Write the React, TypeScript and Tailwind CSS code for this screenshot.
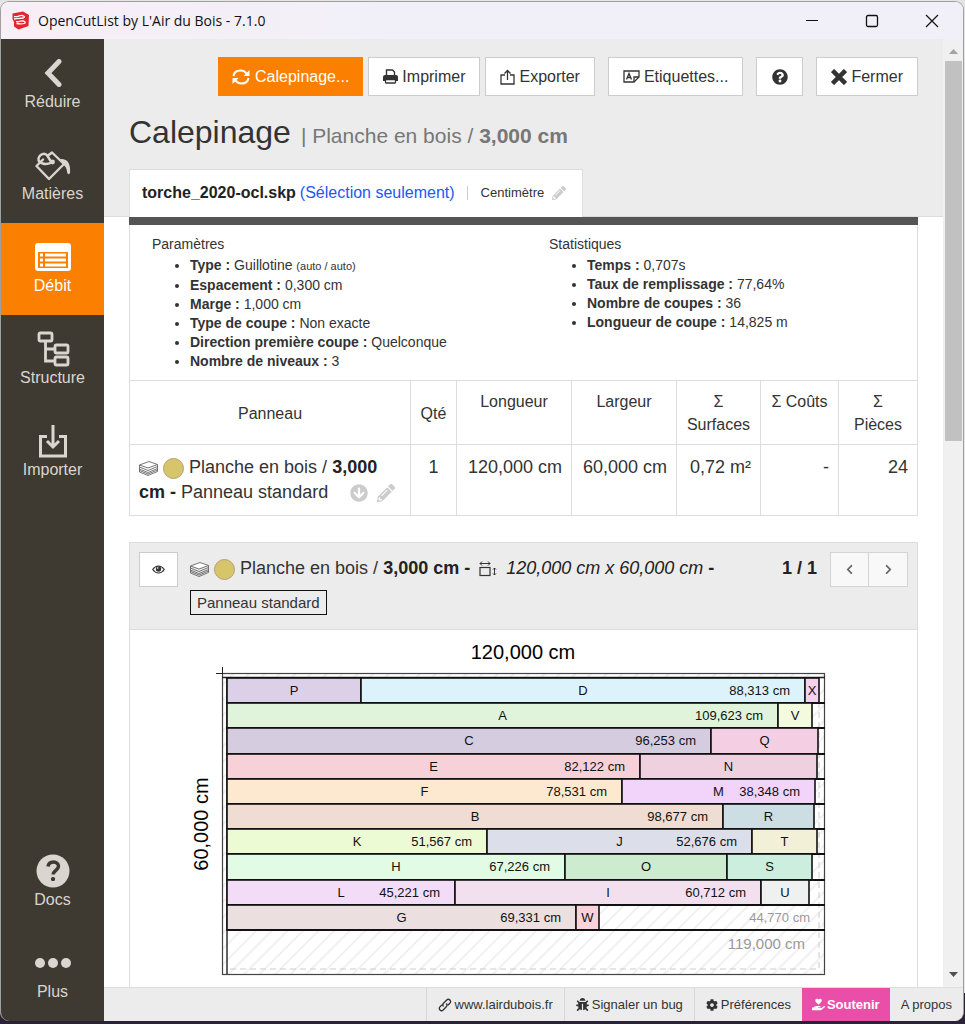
import React, { useState } from "react";
import {
  FaBug,
  FaChevronLeft,
  FaCog,
  FaHandHoldingHeart,
  FaPencilAlt,
  FaQuestionCircle,
  FaArrowCircleDown,
} from "react-icons/fa";

interface Part {
  name: string;
  end: number;
  color: string;
  length?: string;
}

// `end` is the right edge of the part, the first part of a row starts at BOARD_LEFT
const BOARD_LEFT = 97;
const BOARD_RIGHT = 695;
const BOARD_TOP = 48;
const ROW_PITCH = 25.2;

const rows: Part[][] = [
  [
    { name: "P", end: 231, color: "#dccfe8" },
    { name: "D", end: 675, color: "#dcf3fb", length: "88,313 cm" },
    { name: "X", end: 689, color: "#f3d2f0" },
  ],
  [
    { name: "A", end: 648, color: "#dff4da", length: "109,623 cm" },
    { name: "V", end: 682, color: "#f3fadd" },
  ],
  [
    { name: "C", end: 581, color: "#d6cce0", length: "96,253 cm" },
    { name: "Q", end: 688, color: "#f4cee3" },
  ],
  [
    { name: "E", end: 510, color: "#f8d0d8", length: "82,122 cm" },
    { name: "N", end: 687, color: "#efd0df" },
  ],
  [
    { name: "F", end: 492, color: "#fce9cf", length: "78,531 cm" },
    { name: "M", end: 685, color: "#f2d4fa", length: "38,348 cm" },
  ],
  [
    { name: "B", end: 593, color: "#efdcd3", length: "98,677 cm" },
    { name: "R", end: 684, color: "#cddde4" },
  ],
  [
    { name: "K", end: 357, color: "#edfbd5", length: "51,567 cm" },
    { name: "J", end: 622, color: "#dcdfe9", length: "52,676 cm" },
    { name: "T", end: 687, color: "#f2f0d7" },
  ],
  [
    { name: "H", end: 435, color: "#e1fbe4", length: "67,226 cm" },
    { name: "O", end: 597, color: "#cdebcf" },
    { name: "S", end: 682, color: "#cbeedf" },
  ],
  [
    { name: "L", end: 325, color: "#f3dcf8", length: "45,221 cm" },
    { name: "I", end: 631, color: "#f3e0ee", length: "60,712 cm" },
    { name: "U", end: 679, color: "#eff1f1" },
  ],
  [
    { name: "G", end: 446, color: "#ebdfdf", length: "69,331 cm" },
    { name: "W", end: 469, color: "#f9d2da" },
  ],
];

const rowTop = (i: number) => BOARD_TOP + Math.round(i * ROW_PITCH);

const CuttingDiagram = () => (
  <svg viewBox="0 0 787 357" className="block w-full h-auto" fontFamily="Liberation Sans, Arial, sans-serif">
    <defs>
      <pattern id="waste" width="11" height="11" patternUnits="userSpaceOnUse" patternTransform="rotate(45)">
        <path d="M5 0V11" stroke="#e2e2e2" strokeWidth="1" />
      </pattern>
    </defs>
    <text x="393" y="29" fontSize="20" textAnchor="middle">120,000 cm</text>
    <text x="78" y="194" fontSize="20" textAnchor="middle" transform="rotate(-90 78 194)">60,000 cm</text>

    <rect x="92.5" y="43.5" width="602" height="301" fill="#fff" />
    <rect x="92.5" y="43.5" width="602" height="301" fill="url(#waste)" stroke="#444" strokeWidth="1.2" />
    <path d="M86 43.5H93M92.5 37V44" stroke="#222" />
    <path d="M92 47.5H695M97 47V344" stroke="#222" strokeWidth="1.4" />
    <path d="M689 52V339H98" fill="none" stroke="#ccc" strokeDasharray="6 4" />

    {rows.map((row, i) => {
      const top = rowTop(i);
      const height = rowTop(i + 1) - top;
      return (
        <g key={i}>
          {row.map((part, j) => {
            const start = j === 0 ? BOARD_LEFT : row[j - 1].end;
            return (
              <g key={part.name}>
                <rect x={start} y={top} width={part.end - start} height={height} fill={part.color} stroke="#111" strokeWidth="1.6" />
                <text x={(start + part.end) / 2} y={top + 17} fontSize="13" textAnchor="middle" fill="#111">
                  {part.name}
                </text>
                {part.length && (
                  <text x={part.end - 15} y={top + 17} fontSize="13" textAnchor="end" fill="#111">
                    {part.length}
                  </text>
                )}
              </g>
            );
          })}
          <path d={`M${BOARD_LEFT} ${top + height}H${BOARD_RIGHT}`} stroke="#111" strokeWidth="1.8" />
        </g>
      );
    })}
    <text x="680" y="292" fontSize="13" textAnchor="end" fill="#999">44,770 cm</text>
    <text x="675" y="319" fontSize="15" textAnchor="end" fill="#999">119,000 cm</text>
  </svg>
);

const SketchUpLogo = () => (
  <svg width="18" height="19" viewBox="0 0 18 19">
    <path d="M.5 2.500 11 .5 17 4l-.5 11L6.500 18.500 2 15.500V11L.5 8Z" fill="#e3262e" />
    <path d="M2 5.500C6 6.500 7 4 10 4.500s3 2 1 2.500-5 0-9 1M4 10.500c3 1 4-1 7-.5s2.500 2 1 2.500-4 .5-7.500 0" stroke="#fff" strokeWidth="1.300" fill="none" />
  </svg>
);

const BucketIcon = () => (
  <svg width="36" height="31" viewBox="0 0 36 31" fill="none" stroke="currentColor" strokeWidth="2.400" strokeLinejoin="round" strokeLinecap="round">
    <path d="M8 9.500 1.500 16 14 29 29 14 17 2.500 13 5.500" />
    <path d="M16.500 12.500 12.500 6C10 2 4.500 4 3.500 8.500c-.5 5 7 7 13 4" />
    <circle cx="17.500" cy="12" r="2.400" fill="currentColor" stroke="none" />
    <path d="M26 9.500c5 0 9 2.500 8.500 13-.3 1.500-1.500 1.500-1.700 0-.3-3-1-6-4.300-8.500Z" fill="currentColor" strokeWidth="1.200" />
  </svg>
);

const ListIcon = () => (
  <svg width="36" height="28" viewBox="0 0 36 28">
    <rect width="36" height="28" rx="3" fill="currentColor" />
    <rect x="3" y="9" width="30" height="16" fill="#fb7f00" />
    <path d="M5 12H8M10 12H31M5 17H8M10 17H31M5 22H8M10 22H31" stroke="currentColor" strokeWidth="3" />
  </svg>
);

const TreeIcon = () => (
  <svg width="34" height="36" viewBox="0 0 34 36" fill="none" stroke="currentColor" strokeWidth="2.800">
    <rect x="3" y="2" width="13" height="8" rx="1.500" />
    <rect x="19" y="14" width="13" height="8" rx="1.500" />
    <rect x="19" y="26" width="13" height="8" rx="1.500" />
    <path d="M9.500 10V30H19M9.500 18H19" />
  </svg>
);

const ImportIcon = () => (
  <svg width="30" height="34" viewBox="0 0 30 34" fill="none" stroke="currentColor" strokeWidth="3">
    <path d="M9 12.500H2.500V32H27.500V12.500H21" />
    <path d="M15 1V23M9 17l6 6 6-6" />
  </svg>
);

const DocsIcon = () => (
  <svg width="34" height="34" viewBox="0 0 34 34">
    <circle cx="17" cy="17" r="16.500" fill="currentColor" />
    <path d="M12 12.500c.5-3.500 3-4.500 5.500-4.500 3 0 5 1.800 5 4.300 0 4-5.300 4.200-5.300 8.200" fill="none" stroke="#3e3a31" strokeWidth="3.500" />
    <rect x="15" y="23" width="4" height="4" rx="1.500" fill="#3e3a31" />
  </svg>
);

const DotsIcon = () => (
  <svg width="36" height="10" viewBox="0 0 36 10" fill="currentColor">
    <circle cx="5" cy="5" r="5" />
    <circle cx="18" cy="5" r="5" />
    <circle cx="31" cy="5" r="5" />
  </svg>
);

const BackIcon = () => (
  <svg width="20" height="28" viewBox="0 0 20 28" fill="none" stroke="currentColor" strokeWidth="5">
    <path d="M16 2.500 5 14l11 11.500" strokeLinecap="round" />
  </svg>
);

const RefreshIcon = () => (
  <svg width="18" height="16" viewBox="0 0 18 16" fill="none" stroke="currentColor" strokeWidth="2">
    <path d="M1.500 7C2 3.500 5 1.500 8.500 1.500c2.500 0 4.500 1 5.800 2.800" />
    <path d="M16.500 9c-.5 3.500-3.500 5.500-7 5.500-2.500 0-4.500-1-5.800-2.800" />
    <path d="M17.500 1v6h-6ZM.5 15V9h6Z" fill="currentColor" stroke="none" />
  </svg>
);

const PrintIcon = () => (
  <svg width="15" height="15" viewBox="0 0 15 15">
    <path d="M3.500 7V1h6l2 2v4" fill="#fff" stroke="currentColor" strokeWidth="1.400" />
    <path d="M2 6h11a2 2 0 0 1 2 2v4h-2v-2H2v2H0V8a2 2 0 0 1 2-2Z" fill="currentColor" />
    <rect x="2.500" y="10.500" width="10" height="3.500" rx=".5" fill="#fff" stroke="currentColor" strokeWidth="1.300" />
  </svg>
);

const ExportIcon = () => (
  <svg width="15" height="16" viewBox="0 0 15 16" fill="none" stroke="currentColor" strokeWidth="1.300">
    <path d="M5 6H1v9h13V6H10" />
    <path d="M7.500 11V1.500M4.500 4.500l3-3 3 3" />
  </svg>
);

const LabelIcon = () => (
  <svg width="17" height="13" viewBox="0 0 17 13" fill="none" stroke="currentColor" strokeWidth="1.300">
    <path d="M11 12H1V1H16V7Z" />
    <path d="M11 12V7H16" />
    <path d="M3.500 9.500 6 3.500l2.500 6M4.500 7.500H7.500" />
  </svg>
);

const CrossIcon = () => (
  <svg width="16" height="16" viewBox="0 0 16 16" stroke="currentColor" strokeWidth="4.500">
    <path d="M1.500 1.500 14.500 14.500M14.500 1.500 1.500 14.500" />
  </svg>
);

const LayersIcon = () => (
  <svg width="19" height="15" viewBox="0 0 19 15" className="inline-block align-middle" fill="none" stroke="#666" strokeWidth=".9">
    <path d="M.5 4 10 .500 18.500 3.500 9 7Z" fill="#fff" />
    <path d="M.5 4v7L9 14.500 18.500 10.500V3.500M.5 6 9 9.500 18.500 5.500M.5 8 9 11.500 18.500 7.500M.5 9.500 9 13 18.500 9" />
  </svg>
);

const DimensionIcon = () => (
  <svg width="18" height="16" viewBox="0 0 18 16" className="mx-1 inline-block align-middle" fill="none" stroke="currentColor">
    <rect x="1" y="6.500" width="10" height="8" strokeWidth="1.200" />
    <path d="M1 2.500H11M3 .500 1 2.500 3 4.500M9 .500 11 2.500 9 4.500M15.500 7V14M14 8.500l1.500-1.500L17 8.500M14 12.500l1.500 1.500 1.500-1.500" />
  </svg>
);

const EyeIcon = () => (
  <svg width="13" height="9" viewBox="0 0 13 9">
    <path d="M.7 4.500C2.500 2 4.500 1 6.500 1s4 1 5.800 3.500C10.500 7 8.500 8 6.500 8S2.500 7 .7 4.500Z" fill="none" stroke="currentColor" strokeWidth="1.200" />
    <circle cx="6.500" cy="4" r="2.700" fill="currentColor" />
    <circle cx="5.700" cy="3" r=".8" fill="#fff" />
  </svg>
);

const LinkIcon = () => (
  <svg width="14" height="14" viewBox="0 0 14 14" fill="none" stroke="currentColor" strokeWidth="1.300">
    <path d="M5.500 8.500c-1-1-1-2.200 0-3.200L8.700 2c1-1 2.300-1 3.200 0s1 2.300 0 3.200L9.800 7.300" />
    <path d="M8.300 5.500c1 1 1 2.200 0 3.200L5.200 12c-1 1-2.300 1-3.200 0s-1-2.300 0-3.200l2.200-2.200" />
  </svg>
);

const MaterialDot = () => (
  <span className="inline-block size-[21px] rounded-full border border-[#b5a06e] bg-[#d7c56c] align-middle"></span>
);

interface SideItemProps {
  icon: React.ReactNode;
  label: string;
  active?: boolean;
  onClick?: () => void;
}

const SideItem: React.FC<SideItemProps> = ({ icon, label, active, onClick }) => (
  <button
    onClick={onClick}
    className={`flex flex-col items-center w-full h-[92px] pt-4 text-[16px] leading-[22px] ${
      active ? "bg-[#fb7f00] text-white" : "text-[#dad6cf]"
    }`}
  >
    <span className="flex h-9 items-center">{icon}</span>
    {label}
  </button>
);

const toolButton =
  "flex items-center justify-center gap-1 h-[39px] px-[14px] border border-[#ccc] bg-white text-[#333] whitespace-nowrap";

const footerItem = "flex items-center gap-[3px] border-l border-[#d8d8d8] px-[11px]";

const App = () => {
  const [activeTab, setActiveTab] = useState("Débit");

  return (
    <div className="h-screen bg-linear-to-b from-[#e4e4e4] from-97% to-[#2b2238] to-97% pt-px pr-px pb-[3px] font-['Liberation_Sans',Arial,sans-serif] text-[16px] text-[#333]">
      <div className="flex flex-col h-full rounded-[9px] border-t border-l border-r border-[#a0a0a0] overflow-hidden bg-[#ececec]">
        <header className="flex h-[37px] shrink-0 items-center bg-linear-to-r from-[#f8eef6] to-[#f1f0f8] to-40% pl-[11px] pr-6">
          <SketchUpLogo />
          <h1 className="grow pl-2 font-['Open_Sans','Noto_Sans',sans-serif] text-[14px] text-[#111]">
            OpenCutList by L'Air du Bois - 7.1.0
          </h1>
          <div className="flex items-center gap-[46px] text-[#111]">
            <button aria-label="Minimize">
              <svg width="14" height="14" viewBox="0 0 14 14"><path d="M1 6.500H13" stroke="currentColor" strokeWidth="1.200" /></svg>
            </button>
            <button aria-label="Maximize">
              <svg width="14" height="14" viewBox="0 0 14 14"><rect x="1.500" y="1.500" width="11" height="11" rx="1.500" fill="none" stroke="currentColor" strokeWidth="1.300" /></svg>
            </button>
            <button aria-label="Close">
              <svg width="14" height="14" viewBox="0 0 14 14"><path d="M1 1 13 13M13 1 1 13" stroke="currentColor" strokeWidth="1.200" /></svg>
            </button>
          </div>
        </header>

        <div className="flex grow min-h-0">
          <nav className="flex flex-col w-[103px] shrink-0 bg-[#3e3a31]">
            <SideItem icon={<BackIcon />} label="Réduire" />
            <SideItem icon={<BucketIcon />} label="Matières" active={activeTab === "Matières"} onClick={() => setActiveTab("Matières")} />
            <SideItem icon={<ListIcon />} label="Débit" active={activeTab === "Débit"} onClick={() => setActiveTab("Débit")} />
            <SideItem icon={<TreeIcon />} label="Structure" active={activeTab === "Structure"} onClick={() => setActiveTab("Structure")} />
            <SideItem icon={<ImportIcon />} label="Importer" active={activeTab === "Importer"} onClick={() => setActiveTab("Importer")} />
            <div className="mt-auto">
              <SideItem icon={<DocsIcon />} label="Docs" />
              <SideItem icon={<DotsIcon />} label="Plus" />
            </div>
          </nav>

          <div className="flex flex-col grow min-w-0">
            <div className="flex grow min-h-0">
              <main className="grow min-w-0 overflow-hidden bg-white">
                <div className="bg-[#ececec] border-b border-[#ddd] px-[25px] pt-[18px]">
                  <div className="flex justify-end gap-[13px]">
                    <div className="flex gap-[5px]">
                      <button className="flex items-center justify-center gap-[5px] h-[39px] px-[14px] bg-[#fb7f00] text-white whitespace-nowrap">
                        <RefreshIcon />
                        Calepinage...
                      </button>
                      <button className={toolButton}>
                        <PrintIcon />
                        Imprimer
                      </button>
                      <button className={toolButton}>
                        <ExportIcon />
                        Exporter
                      </button>
                    </div>
                    <button className={toolButton}>
                      <LabelIcon />
                      Etiquettes...
                    </button>
                    <button className={`${toolButton} w-[47px]`} aria-label="Aide">
                      <FaQuestionCircle className="size-4 shrink-0" />
                    </button>
                    <button className={toolButton}>
                      <CrossIcon />
                      Fermer
                    </button>
                  </div>

                  <h2 className="mt-4 flex items-baseline gap-[10px] text-[32px] leading-[40px]">
                    Calepinage
                    <small className="text-[21px] text-[#777]">
                      | Planche en bois / <b>3,000 cm</b>
                    </small>
                  </h2>

                  <div className="-mb-px mt-[13px] flex w-fit items-center h-12 border border-b-0 border-[#ddd] bg-white px-3 pb-[2px] whitespace-nowrap">
                    <b className="text-[#222]">torche_2020-ocl.skp</b>
                    <a href="#selection" className="ml-1 text-[#2257f5]">
                      (Sélection seulement)
                    </a>
                    <span className="ml-3 h-[14px] border-l border-[#ccc]"></span>
                    <span className="ml-[13px] text-[13px]">Centimètre</span>
                    <button className="ml-2 mr-1 text-[#ccc]" aria-label="Modifier l'unité">
                      <FaPencilAlt className="size-[14px]" />
                    </button>
                  </div>
                </div>

                <div className="mx-[25px] bg-white">
                  <div className="h-2 bg-[#555]"></div>
                  <section className="flex border-x border-[#ddd] px-[22px] pt-[10px] pb-[9px] text-[14px] leading-[19px]">
                    <div className="w-[397px]">
                      <h3>Paramètres</h3>
                      <ul className="list-disc pl-[38px] pt-[2px]">
                        <li>
                          <b>Type :</b> Guillotine <small className="text-[11px]">(auto / auto)</small>
                        </li>
                        <li><b>Espacement :</b> 0,300 cm</li>
                        <li><b>Marge :</b> 1,000 cm</li>
                        <li><b>Type de coupe :</b> Non exacte</li>
                        <li><b>Direction première coupe :</b> Quelconque</li>
                        <li><b>Nombre de niveaux :</b> 3</li>
                      </ul>
                    </div>
                    <div>
                      <h3>Statistiques</h3>
                      <ul className="list-disc pl-[38px] pt-[2px]">
                        <li><b>Temps :</b> 0,707s</li>
                        <li><b>Taux de remplissage :</b> 77,64%</li>
                        <li><b>Nombre de coupes :</b> 36</li>
                        <li><b>Longueur de coupe :</b> 14,825 m</li>
                      </ul>
                    </div>
                  </section>

                  <table className="w-full table-fixed border-collapse text-[18px] leading-[25px] [&_td]:border [&_th]:border [&_td]:border-[#ddd] [&_th]:border-[#ddd] [&_th]:font-normal [&_td]:px-[9px] [&_td]:py-[10px] [&_th]:px-[9px] [&_th]:pt-[9px] [&_th]:pb-2 [&_td]:align-top [&_th]:align-top">
                    <colgroup>
                      <col />
                      <col className="w-[46px]" />
                      <col className="w-[115px]" />
                      <col className="w-[105px]" />
                      <col className="w-[84px]" />
                      <col className="w-[78px]" />
                      <col className="w-[79px]" />
                    </colgroup>
                    <thead className="text-[16px] leading-[23px]">
                      <tr>
                        <th className="!align-middle">Panneau</th>
                        <th className="!align-middle">Qté</th>
                        <th>Longueur</th>
                        <th>Largeur</th>
                        <th>Σ Surfaces</th>
                        <th className="whitespace-nowrap">Σ Coûts</th>
                        <th>Σ Pièces</th>
                      </tr>
                    </thead>
                    <tbody>
                      <tr>
                        <td>
                          <LayersIcon /> <MaterialDot /> Planche en bois / <b className="text-[#222]">3,000</b>{" "}
                          <b className="text-[#222]">cm -</b> <span>Panneau standard</span>
                          <span className="ml-[22px] inline-flex gap-[9px] align-middle text-[#ccc]">
                            <button aria-label="Voir le panneau"><FaArrowCircleDown className="size-[18px]" /></button>
                            <button aria-label="Modifier le panneau"><FaPencilAlt className="size-[18px]" /></button>
                          </span>
                        </td>
                        <td className="text-center">1</td>
                        <td className="text-right whitespace-nowrap">120,000 cm</td>
                        <td className="text-right whitespace-nowrap">60,000 cm</td>
                        <td className="text-right whitespace-nowrap">0,72 m²</td>
                        <td className="text-right">-</td>
                        <td className="text-right">24</td>
                      </tr>
                    </tbody>
                  </table>
                </div>

                <section className="mx-[25px] mt-[26px] border border-[#ddd]">
                  <div className="flex items-start border-b border-[#ddd] bg-[#ececec] px-[9px] pt-[9px] pb-[14px] text-[18px]">
                    <button className="flex h-[35px] w-[39px] shrink-0 items-center justify-center border border-[#ccc] bg-white" aria-label="Afficher">
                      <EyeIcon />
                    </button>
                    <div className="grow pl-3">
                      <div className="h-[35px] leading-[32px] whitespace-nowrap">
                        <LayersIcon /> <MaterialDot /> Planche en bois / <b className="text-[#222]">3,000 cm - </b>
                        <DimensionIcon /> <i className="text-[#222]">120,000 cm x 60,000 cm</i> <b className="text-[#222]">-</b>
                      </div>
                      <span className="mt-[3px] block w-fit border border-[#111] px-[6px] text-[15px] leading-[23px]">
                        Panneau standard
                      </span>
                    </div>
                    <b className="mr-[13px] leading-[32px] text-[#222] whitespace-nowrap">1 / 1</b>
                    <div className="flex shrink-0 text-[#666]">
                      <button className="flex h-[35px] w-[39px] items-center justify-center border border-[#d4d4d4] bg-[#f8f8f8]" aria-label="Précédent">
                        <FaChevronLeft className="size-[11px]" />
                      </button>
                      <button className="flex h-[35px] w-[39px] items-center justify-center border border-l-0 border-[#d4d4d4] bg-[#f8f8f8]" aria-label="Suivant">
                        <FaChevronLeft className="size-[11px] rotate-180" />
                      </button>
                    </div>
                  </div>
                  <CuttingDiagram />
                </section>
              </main>

              <div className="flex w-5 shrink-0 flex-col items-center bg-[#f0f0f0]">
                <svg width="9" height="22" viewBox="0 0 9 22"><path d="M0 15 4.500 10 9 15Z" fill="#a3a3a3" /></svg>
                <div className="h-[380px] w-[17px] bg-[#c1c1c1]"></div>
                <svg width="9" height="22" viewBox="0 0 9 22" className="mt-auto"><path d="M0 7 4.500 12 9 7Z" fill="#505050" /></svg>
              </div>
            </div>

            <footer className="flex h-[34px] shrink-0 justify-end border-t border-[#ddd] bg-[#ececec] text-[13px] whitespace-nowrap">
              <a href="#site" className={footerItem}>
                <LinkIcon />
                www.lairdubois.fr
              </a>
              <a href="#bug" className={footerItem}>
                <FaBug className="size-[13px]" />
                Signaler un bug
              </a>
              <button className={footerItem}>
                <FaCog className="size-3" />
                Préférences
              </button>
              <button className="flex items-center gap-[2px] bg-[#e94fa9] px-[10px] font-bold text-white">
                <FaHandHoldingHeart className="size-[13px]" />
                Soutenir
              </button>
              <button className="px-[11px]">A propos</button>
            </footer>
          </div>
        </div>
      </div>
    </div>
  );
};

export default App;
